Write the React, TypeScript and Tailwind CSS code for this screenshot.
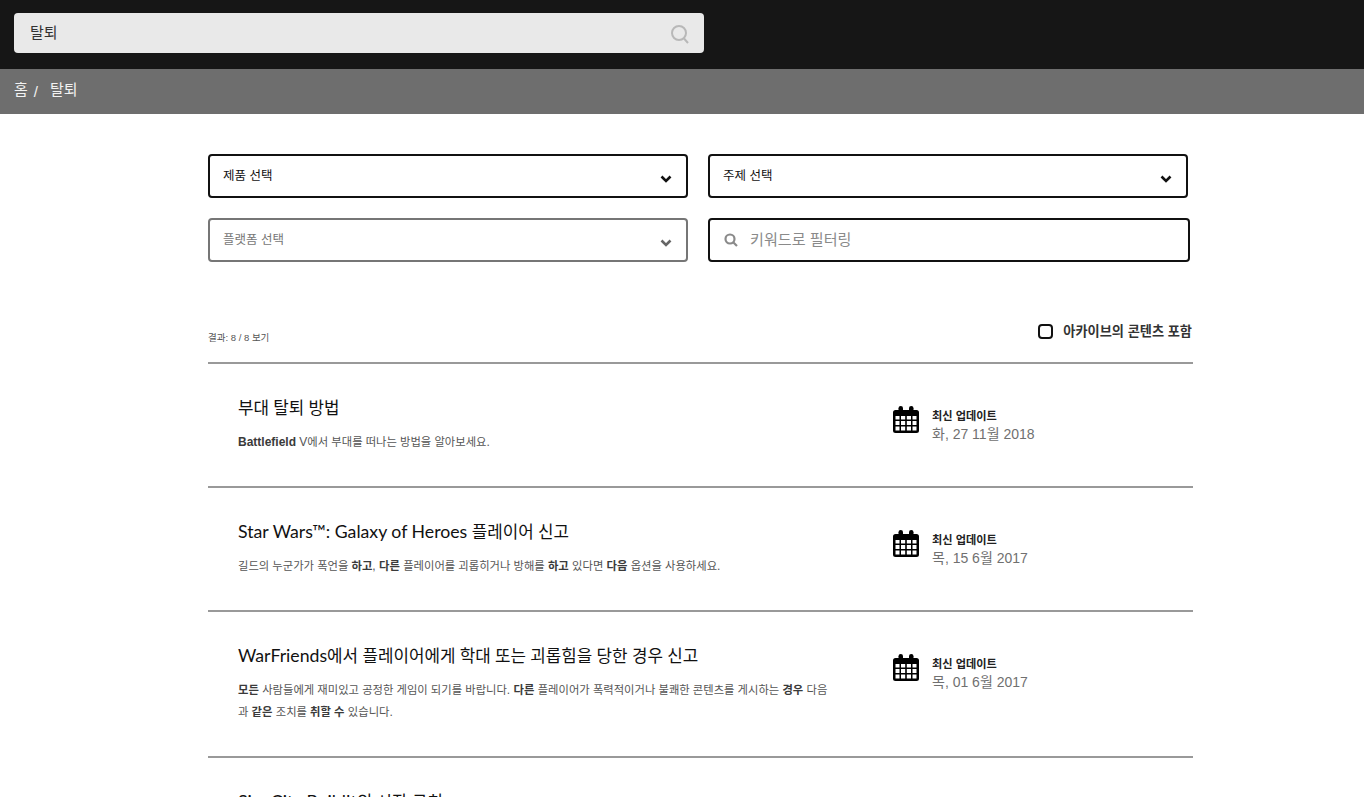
import React from "react";

const sans = "font-['Liberation_Sans','Noto_Sans_CJK_KR',sans-serif]";

function Runs({ text, hangul }: { text: string; hangul: string }) {
  const parts = text.split(/([\uAC00-\uD7A3][\uAC00-\uD7A3 ]*)/).filter(Boolean);
  return (
    <>
      {parts.map((p, i) =>
        /[\uAC00-\uD7A3]/.test(p[0]) ? (
          <span key={i} className={hangul}>
            {p}
          </span>
        ) : (
          <span key={i}>{p}</span>
        )
      )}
    </>
  );
}

function Chevron({ color }: { color: string }) {
  return (
    <svg width="12" height="8" viewBox="0 0 12 8" className="block">
      <path d="M1.500 1.500 L6 6 L10.500 1.500" fill="none" stroke={color} strokeWidth="2.600" />
    </svg>
  );
}

function Calendar() {
  return (
    <svg width="26" height="27" viewBox="0 0 26 27" className="shrink-0">
      <rect x="5.500" y="0" width="4.500" height="8" rx="2.200" fill="#000" />
      <rect x="16" y="0" width="4.500" height="8" rx="2.200" fill="#000" />
      <path
        fillRule="evenodd"
        fill="#000"
        d="M2.500 4H23.500A2.500 2.500 0 0 1 26 6.500V24.500A2.500 2.500 0 0 1 23.500 27H2.500A2.500 2.500 0 0 1 0 24.500V6.500A2.500 2.500 0 0 1 2.500 4ZM2.500 10V13.500H6.500V10ZM8 10V13.500H12.200V10ZM13.800 10V13.500H18V10ZM19.500 10V13.500H23.500V10ZM2.500 15V19H6.500V15ZM8 15V19H12.200V15ZM13.800 15V19H18V15ZM19.500 15V19H23.500V15ZM2.500 20.500V24.500H6.500V20.500ZM8 20.500V24.500H12.200V20.500ZM13.800 20.500V24.500H18V20.500ZM19.500 20.500V24.500H23.500V20.500Z"
      />
    </svg>
  );
}

function Select({ label, muted }: { label: string; muted?: boolean }) {
  return (
    <div
      className={`flex h-11 w-[480px] items-start justify-between rounded-[4px] border-2 bg-white pl-[13px] pr-[14px] pt-[12px] ${
        muted ? "border-[#767676] text-[#767676]" : "border-[#111111] text-[#111111]"
      }`}
    >
      <span className="text-[12.500px] leading-[16px]">{label}</span>
      <span className="mt-[7px]">
        <Chevron color={muted ? "#666666" : "#111111"} />
      </span>
    </div>
  );
}

type Item = {
  title: string;
  body: React.ReactNode;
  date: string;
  h: string;
};

const H = "text-[11.320px]";
const T = ({ children }: { children: string }) => <Runs text={children} hangul={H} />;
const B = ({ children }: { children: string }) => (
  <b className="font-bold text-[#3a3a3a]">
    <Runs text={children} hangul={H} />
  </b>
);

const items: Item[] = [
  {
    title: "부대 탈퇴 방법",
    body: (
      <>
        <B>Battlefield</B>
        <T> V에서 부대를 떠나는 방법을 알아보세요.</T>
      </>
    ),
    date: "화, 27 11월 2018",
    h: "h-[124px]",
  },
  {
    title: "Star Wars™: Galaxy of Heroes 플레이어 신고",
    body: (
      <>
        <T>길드의 누군가가 폭언을 </T>
        <B>하고</B>
        <T>, </T>
        <B>다른</B>
        <T> 플레이어를 괴롭히거나 방해를 </T>
        <B>하고</B>
        <T> 있다면 </T>
        <B>다음</B>
        <T> 옵션을 사용하세요.</T>
      </>
    ),
    date: "목, 15 6월 2017",
    h: "h-[124px]",
  },
  {
    title: "WarFriends에서 플레이어에게 학대 또는 괴롭힘을 당한 경우 신고",
    body: (
      <>
        <B>모든</B>
        <T> 사람들에게 재미있고 공정한 게임이 되기를 바랍니다. </T>
        <B>다른</B>
        <T> 플레이어가 폭력적이거나 불쾌한 콘텐츠를 게시하는 </T>
        <B>경우</B>
        <T> 다음과 </T>
        <B>같은</B>
        <T> 조치를 </T>
        <B>취할 수</B>
        <T> 있습니다.</T>
      </>
    ),
    date: "목, 01 6월 2017",
    h: "h-[146px]",
  },
  {
    title: "Sim City BuildIt의 시장 규칙",
    body: null,
    date: "",
    h: "h-[124px]",
  },
];

export default function App() {
  return (
    <div className={`h-[797px] overflow-hidden bg-white antialiased ${sans}`}>
      <header className="h-[69px] bg-[#161616] pl-[14px] pt-[13px]">
        <div className="flex h-10 w-[690px] items-center justify-between rounded-[4px] bg-[#e9e9e9] pl-4 pr-[15px]">
          <span className="text-[15px] leading-[38px] text-[#333333]">탈퇴</span>
          <svg width="18" height="19" viewBox="0 0 18 19" fill="none" stroke="#b8b8b8" strokeWidth="2" className="mt-[2px]">
            <circle cx="8" cy="8" r="7" />
            <path d="M13 13.500 L17 18" />
          </svg>
        </div>
      </header>
      <nav className="flex h-[45px] items-center bg-[#6e6e6e] pb-[2px] pl-[14px] text-[15px] text-[#f2f2f2]">
        <span>홈</span>
        <span className="ml-[6px] mt-[3px]">/</span>
        <span className="ml-[12px]">탈퇴</span>
      </nav>
      <main className="pl-[208px] pt-10">
        <div className="flex w-[982px] flex-wrap gap-x-5 gap-y-5">
          <Select label="제품 선택" />
          <Select label="주제 선택" />
          <Select label="플랫폼 선택" muted />
          <div className="flex h-11 w-[482px] items-center rounded-[4px] border-2 border-[#111111] bg-white pl-[14px]">
            <svg width="14" height="14" viewBox="0 0 14 14" fill="none" stroke="#8a8a8a" strokeWidth="2.200">
              <circle cx="6" cy="6" r="4.500" />
              <path d="M9.500 9.500 L13 13" />
            </svg>
            <span className="ml-[12px] mt-[1px] text-[15.100px] text-[#8a8a8a]">키워드로 필터링</span>
          </div>
        </div>
        <div className="mt-[59px] flex h-[43px] w-[985px] items-start justify-between border-b-2 border-[#999999]">
          <span className="mt-[11px] text-[9.500px] leading-[12px] text-[#555555]">결과: 8 / 8 보기</span>
          <div className="mr-px flex items-center pt-px">
            <span className="-mt-[2px] h-[15px] w-[15px] rounded-[4px] border-2 border-[#111111]" />
            <span className="ml-[10px] text-[13.200px] font-bold leading-5 text-[#333333]">아카이브의 콘텐츠 포함</span>
          </div>
        </div>
        {items.map((it) => (
          <article key={it.title} className={`flex w-[985px] border-b-2 border-[#999999] pl-[30px] pt-[30px] ${it.h}`}>
            <div className="w-[655px] shrink-0">
              <h2 className="font-['Lato','Noto_Sans_CJK_KR',sans-serif] text-[17.700px] leading-[28px] text-[#111111]">
                <Runs text={it.title} hangul="text-[16.850px]" />
              </h2>
              {it.body && <p className="mt-[9px] w-[592px] text-xs leading-[22px] text-[#555555]">{it.body}</p>}
            </div>
            {it.date && (
              <div className="flex items-start pt-[12px]">
                <Calendar />
                <div className="ml-[13px] mt-[2px]">
                  <div className="text-[11.200px] font-bold leading-[16px] text-[#222222]">최신 업데이트</div>
                  <div className="text-sm leading-[20px] text-[#707070]">{it.date}</div>
                </div>
              </div>
            )}
          </article>
        ))}
      </main>
    </div>
  );
}
